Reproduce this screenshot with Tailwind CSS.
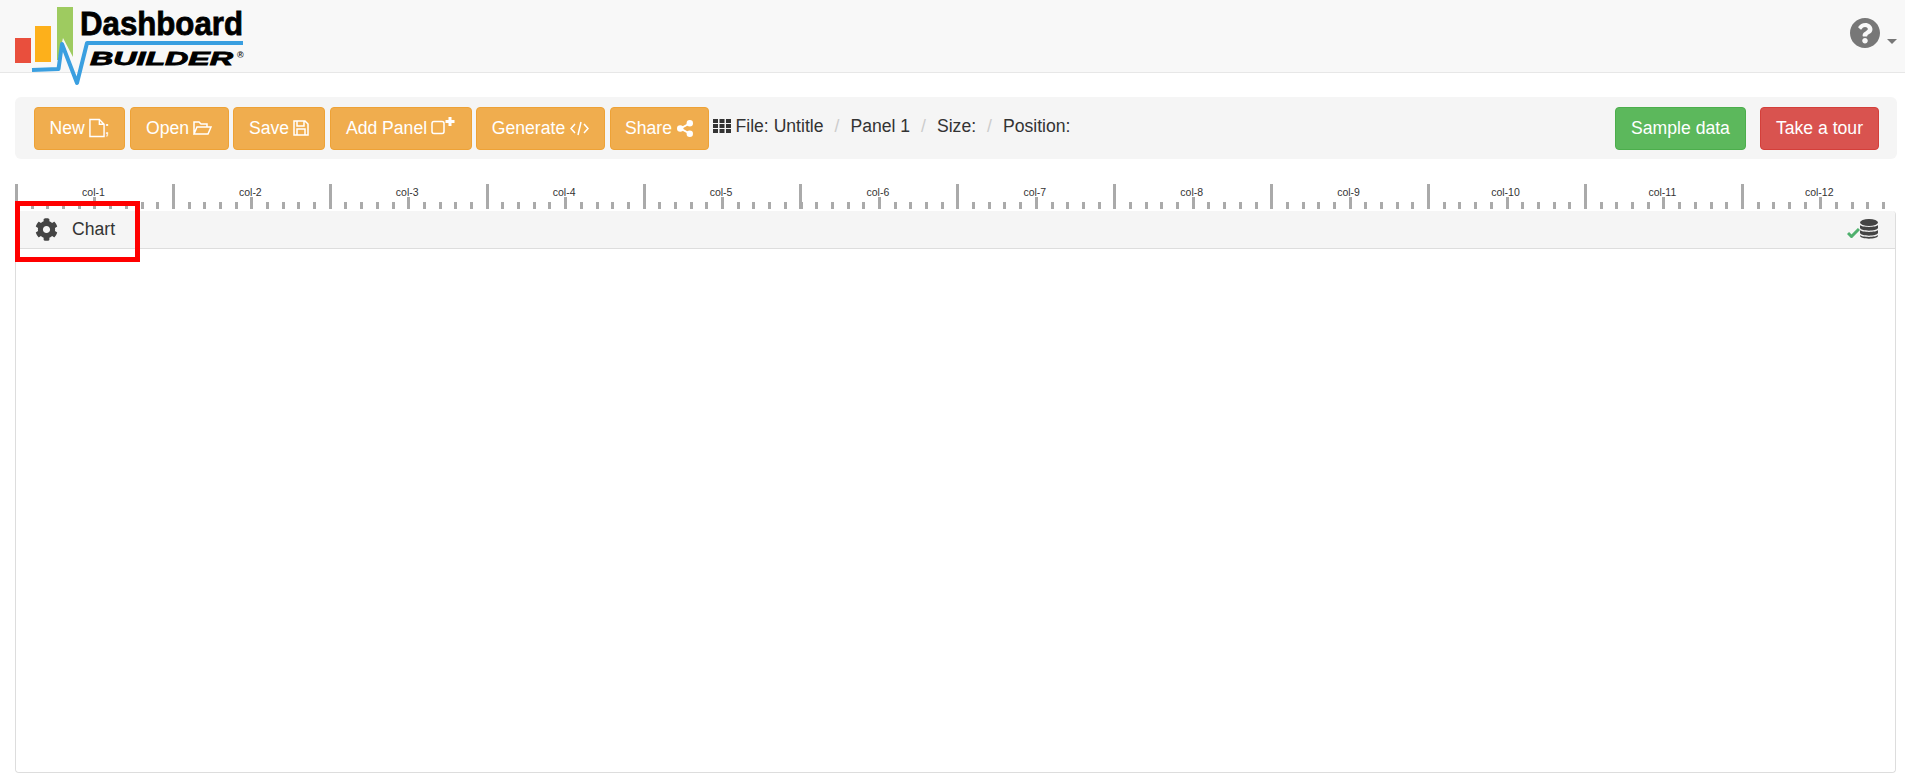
<!DOCTYPE html>
<html>
<head>
<meta charset="utf-8">
<script src="https://cdn.jsdelivr.net/npm/@tailwindcss/browser@4"></script>
<title>Dashboard Builder</title>
</head>
<body class="bg-white font-['Liberation_Sans',Arial,sans-serif] text-[#333] text-[17.6px] overflow-hidden h-[783px] relative">

<nav class="h-[73px] bg-[#f8f8f8] border-b border-[#e7e7e7] flex items-start justify-between pl-[15px] pr-[8px]">
  <svg class="w-[240px] h-[90px] shrink-0 overflow-visible relative z-10" viewBox="15 0 240 90">
    <rect x="15" y="38" width="16" height="25" fill="#e94f3d"/>
    <rect x="35" y="26" width="16" height="36" fill="#fdb01b"/>
    <polygon points="57,7 73,7 73,57 63,38 58,60 57,60" fill="#9ecb60"/>
    <polyline points="32,70 58.500,69 62,44 77,83 87,43 243,43" fill="none" stroke="#3a9fe0" stroke-width="4" stroke-linejoin="round"/>
    <text x="80" y="35" font-family="Liberation Sans" font-weight="700" font-size="34" textLength="163" lengthAdjust="spacingAndGlyphs" fill="#000" stroke="#000" stroke-width="0.800">Dashboard</text>
    <text x="90" y="65" font-family="Liberation Sans" font-weight="700" font-style="italic" font-size="18" textLength="143" lengthAdjust="spacingAndGlyphs" fill="#000" stroke="#000" stroke-width="0.800">BUILDER</text>
    <text x="237" y="58" font-family="Liberation Sans" font-weight="700" font-size="9" fill="#222">®</text>
  </svg>
  <div class="flex items-end h-[48px] gap-[7px] mt-0">
    <svg class="w-[30px] h-[30px]" viewBox="8 8 496 496"><path fill="#777" d="M504 256c0 136.997-111.043 248-248 248S8 392.997 8 256C8 119.083 119.043 8 256 8s248 111.083 248 248zM262.655 90c-54.497 0-89.255 22.957-116.549 63.758-3.536 5.286-2.353 12.415 2.715 16.258l34.699 26.31c5.205 3.947 12.621 3.008 16.665-2.122 17.864-22.658 30.113-35.797 57.303-35.797 20.429 0 45.698 13.148 45.698 32.958 0 14.976-12.363 22.667-32.534 33.976C247.128 238.528 216 254.941 216 296v4c0 6.627 5.373 12 12 12h56c6.627 0 12-5.373 12-12v-1.333c0-28.462 83.186-29.647 83.186-106.667 0-58.002-60.165-102-116.531-102zM256 338c-25.365 0-46 20.635-46 46 0 25.364 20.635 46 46 46s46-20.636 46-46c0-25.365-20.635-46-46-46z"/></svg>
    <div class="w-0 h-0 mb-[4px] border-x-[5px] border-x-transparent border-t-[5px] border-t-[#777]"></div>
  </div>
</nav>

<section class="mt-[24px] ml-[15px] mr-[8px] h-[62px] bg-[#f5f5f5] rounded-[6px] flex items-center pl-[19px] pr-[18px]">
  <div class="flex items-center gap-[4.500px]">
    <button class="h-[43px] w-[91px] justify-center bg-[#f0ad4e] border border-[#eea236] rounded-[4px] text-white flex items-center gap-[4px]">New
      <span class="flex items-center"><svg class="w-[16px] h-[20px]" viewBox="0 0 17 20" fill="none" stroke="white" stroke-width="1.500"><path d="M1 1h10l5 5v13H1zM11 1v5h5"/></svg>;</span>
    </button>
    <button class="h-[43px] w-[99px] justify-center bg-[#f0ad4e] border border-[#eea236] rounded-[4px] text-white flex items-center gap-[4px]">Open
      <svg class="w-[19px] h-[16px]" viewBox="0 0 19 16" fill="none" stroke="white" stroke-width="1.500"><path d="M1 14V2h5l2 2h6v3M1 14l3-7h14l-3 7z"/></svg>
    </button>
    <button class="h-[43px] w-[92px] justify-center bg-[#f0ad4e] border border-[#eea236] rounded-[4px] text-white flex items-center gap-[4px]">Save
      <svg class="w-[16px] h-[16px]" viewBox="0 0 16 16" fill="none" stroke="white" stroke-width="1.500"><path d="M1 1h11l3 3v11H1zM4 1v5h7V1M4 15V9h8v6"/></svg>
    </button>
    <button class="h-[43px] w-[142px] justify-center bg-[#f0ad4e] border border-[#eea236] rounded-[4px] text-white flex items-center gap-[4px]">Add Panel
      <svg class="w-[24px] h-[18px] -translate-y-[2px]" viewBox="0 0 24 18" fill="none" stroke="white"><rect x="1" y="4.500" width="12" height="12" rx="2" stroke-width="1.500"/><path d="M19 0v9M14.500 4.500h9" stroke-width="3"/></svg>
    </button>
    <button class="h-[43px] w-[129px] justify-center bg-[#f0ad4e] border border-[#eea236] rounded-[4px] text-white flex items-center gap-[5px]">Generate
      <svg class="w-[19px] h-[15px]" viewBox="0 0 19 15" fill="none" stroke="white" stroke-width="1.500"><path d="M5 3 1 7.500 5 12M14 3l4 4.500L14 12M11 1 8 14"/></svg>
    </button>
    <button class="h-[43px] w-[99px] justify-center bg-[#f0ad4e] border border-[#eea236] rounded-[4px] text-white flex items-center gap-[5px]">Share
      <svg class="w-[16px] h-[17px]" viewBox="0 0 16 17"><path d="M12.500 3.500 3.500 8.500l9 5" fill="none" stroke="white" stroke-width="2"/><circle cx="12.800" cy="3.300" r="3.200" fill="white"/><circle cx="3.200" cy="8.500" r="3.200" fill="white"/><circle cx="12.800" cy="13.700" r="3.200" fill="white"/></svg>
    </button>
  </div>
  <div class="flex items-center ml-[4px] mb-[3px]">
    <svg class="w-[18px] h-[14px] mr-[5px]" viewBox="0 0 18 14" fill="#333"><path d="M0 0h5v4H0zM6.500 0h5v4h-5zM13 0h5v4h-5zM0 5h5v4H0zM6.500 5h5v4h-5zM13 5h5v4h-5zM0 10h5v4H0zM6.500 10h5v4h-5zM13 10h5v4h-5z"/></svg>
    <span>File: Untitle</span>
    <span class="text-[#ccc] px-[11px]">/</span>
    <span>Panel 1</span>
    <span class="text-[#ccc] px-[11px]">/</span>
    <span>Size:</span>
    <span class="text-[#ccc] px-[11px]">/</span>
    <span>Position:</span>
  </div>
  <div class="ml-auto flex items-center gap-[14px]">
    <button class="h-[43px] w-[131px] bg-[#5cb85c] border border-[#4cae4c] rounded-[4px] text-white">Sample data</button>
    <button class="h-[43px] w-[119px] bg-[#d9534f] border border-[#d43f3a] rounded-[4px] text-white">Take a tour</button>
  </div>
</section>

<div class="mt-[25px] ml-[15px] w-[1870px] h-[25px] grid grid-cols-[repeat(12,156.9px)] text-[10.500px] leading-[16px] text-center text-[#333] bg-no-repeat" style="background-image:repeating-linear-gradient(90deg,#aaa 0,#aaa 3px,transparent 3px,transparent 156.900px),repeating-linear-gradient(90deg,transparent 0,transparent 78.450px,#aaa 78.450px,#aaa 81.450px,transparent 81.450px,transparent 156.900px),repeating-linear-gradient(90deg,#aaa 0,#aaa 3px,transparent 3px,transparent 15.690px);background-size:100% 25px,100% 12px,100% 7px;background-position:0 0,0 bottom,0 bottom">
  <span>col-1</span><span>col-2</span><span>col-3</span><span>col-4</span><span>col-5</span><span>col-6</span><span>col-7</span><span>col-8</span><span>col-9</span><span>col-10</span><span>col-11</span><span>col-12</span>
</div>

<main class="mt-[2px] ml-[15px] w-[1881px] h-[562px] rounded-[4px] border border-[#ddd] border-t-0 flex flex-col">
  <div class="h-[38px] bg-[#f5f5f5] rounded-t-[4px] border-b border-[#ddd] flex items-center justify-between pl-[19px] pr-[17px] shrink-0">
    <div class="flex items-center gap-[14px]">
      <svg class="w-[23px] h-[23px]" viewBox="0 0 512 512"><path fill="#444" d="M487.4 315.7l-42.6-24.6c4.3-23.2 4.3-47 0-70.2l42.6-24.6c4.9-2.8 7.1-8.6 5.500-14-11.100-35.600-30-67.800-54.700-94.600-3.800-4.100-10-5.100-14.800-2.300L380.800 110c-17.900-15.400-38.500-27.300-60.800-35.100V25.800c0-5.600-3.900-10.500-9.400-11.700-36.700-8.200-74.300-7.800-109.200 0-5.500 1.200-9.400 6.100-9.400 11.700V75c-22.200 7.900-42.800 19.800-60.800 35.100L88.700 85.500c-4.900-2.800-11-1.900-14.800 2.300-24.700 26.700-43.600 58.900-54.700 94.600-1.700 5.400.6 11.200 5.500 14L67.300 221c-4.300 23.200-4.300 47 0 70.200l-42.600 24.600c-4.900 2.800-7.100 8.600-5.500 14 11.100 35.600 30 67.800 54.700 94.600 3.800 4.100 10 5.100 14.800 2.300l42.600-24.600c17.900 15.400 38.500 27.300 60.800 35.100v49.200c0 5.600 3.900 10.500 9.400 11.700 36.700 8.200 74.300 7.800 109.200 0 5.500-1.200 9.400-6.100 9.400-11.700v-49.200c22.200-7.900 42.800-19.800 60.800-35.100l42.600 24.600c4.900 2.800 11 1.900 14.800-2.300 24.700-26.700 43.600-58.900 54.700-94.600 1.500-5.500-.7-11.300-5.600-14.100zM256 336c-44.100 0-80-35.900-80-80s35.900-80 80-80 80 35.900 80 80-35.900 80-80 80z"/></svg>
      <span>Chart</span>
    </div>
    <div class="flex items-end gap-0 mb-[2px]">
      <svg class="w-[13px] h-[10px] mb-[1px]" viewBox="0 0 13 10" fill="none" stroke="#4fb06d" stroke-width="3"><path d="M1 5l3.500 3.500L12 1"/></svg>
      <svg class="w-[18px] h-[20px]" viewBox="0 0 18 20" fill="#444"><ellipse cx="9" cy="3.500" rx="9" ry="3.500"/><path d="M0 6c2 2.500 16 2.500 18 0v3c-1 3.500-17 3.500-18 0zM0 11c2 2.500 16 2.500 18 0v3c-1 3.500-17 3.500-18 0zM0 16c2 2.500 16 2.500 18 0v1c-1 3.500-17 3.500-18 0z"/></svg>
    </div>
  </div>
  <div class="flex-1 bg-white rounded-b-[4px]"></div>
</main>

<div class="absolute left-[15px] top-[201px] w-[125px] h-[61px] border-[5px] border-[#ff0000] z-20"></div>
</body>
</html>
